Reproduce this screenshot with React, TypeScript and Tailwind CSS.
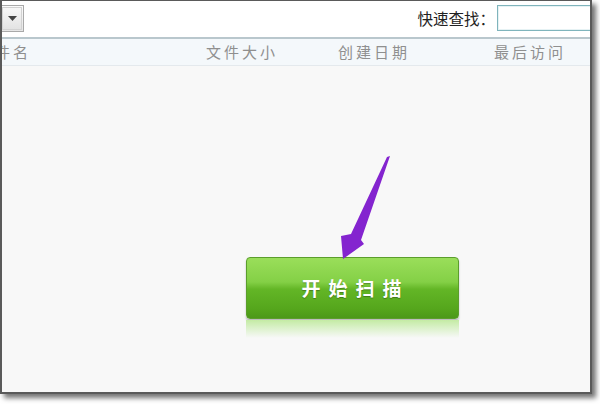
import React from 'react';

const cjk = { fontFamily: '"Noto Sans CJK SC", "Noto Sans", sans-serif' };

const Dropdown: React.FC = () => (
  <div className="ml-[-20px] mt-[4px] flex h-[27px] w-[42px] items-center justify-end border border-[#a9a9a9] bg-gradient-to-b from-[#fbfbfb] to-[#e6e6e6] p-px">
    <div className="flex h-full w-[20px] items-center justify-center border border-[#d2d2d2] bg-gradient-to-b from-[#f7f7f7] to-[#e3e3e3]">
      <svg width="9" height="5" viewBox="0 0 9 5">
        <polygon points="0,0 9,0 4.5,5" fill="#444" />
      </svg>
    </div>
  </div>
);

const App: React.FC = () => {
  return (
    <div className="relative h-[404px] w-[600px] overflow-hidden bg-white" style={cjk}>
      {/* WINDOW */}
      <div className="flex h-[394px] w-[592px] flex-col overflow-hidden border-b-2 border-l-2 border-r-2 border-t border-[#5a5a5a] bg-[#f8f8f8] shadow-[4px_4px_5px_rgba(0,0,0,0.55)]">
        {/* TOOLBAR */}
        <div className="flex h-[36px] shrink-0 items-start bg-white">
          <Dropdown />
          <div className="flex-1" />
          <span className="mt-[7px] text-[15.5px] leading-[20px] text-[#222]">快速查找：</span>
          <div className="ml-[2px] mr-[-40px] mt-[4px] h-[26px] w-[133px] border border-[#7fb4bc] bg-white shadow-[inset_0_0_0_1px_#e6f2f4]" />
        </div>

        {/* COLUMN HEADER */}
        <div className="flex h-[29px] shrink-0 items-center border-b border-t-2 border-b-[#e4e9ed] border-t-[#b9c7cd] bg-[#f4f8fb] text-[15px] tracking-[3px] text-[#8f8f8f]">
          <span className="ml-[-25px] w-[229px]">文件名</span>
          <span className="w-[132px]">文件大小</span>
          <span className="w-[156px]">创建日期</span>
          <span>最后访问</span>
        </div>

        {/* CONTENT */}
        <div className="flex flex-1 flex-col pl-[244px] pt-[191px]">
          <button className="flex h-[62px] w-[213px] items-center justify-center rounded-[4px] border border-[#5b9e2c] bg-[linear-gradient(to_bottom,#9ade5a_0%,#84d046_40%,#63b626_52%,#55a61c_85%,#4c9819_100%)] pl-[6px] text-[19px] font-semibold tracking-[8px] text-white shadow-[0_2px_2px_rgba(0,0,0,0.25)] [text-shadow:0_1px_1px_rgba(0,0,0,0.3)]">
            开始扫描
          </button>
          <div className="mt-[1px] h-[18px] w-[213px] bg-gradient-to-b from-[#c4eba4] to-[#f8f8f8]" />
        </div>
      </div>

      {/* ARROW */}
      <svg className="pointer-events-none absolute left-0 top-0" width="600" height="404">
        <polygon points="390,156 361,240 364,244 343,259 341,236 351,234 387,157" fill="#8424cf" />
      </svg>
    </div>
  );
};

export default App;
